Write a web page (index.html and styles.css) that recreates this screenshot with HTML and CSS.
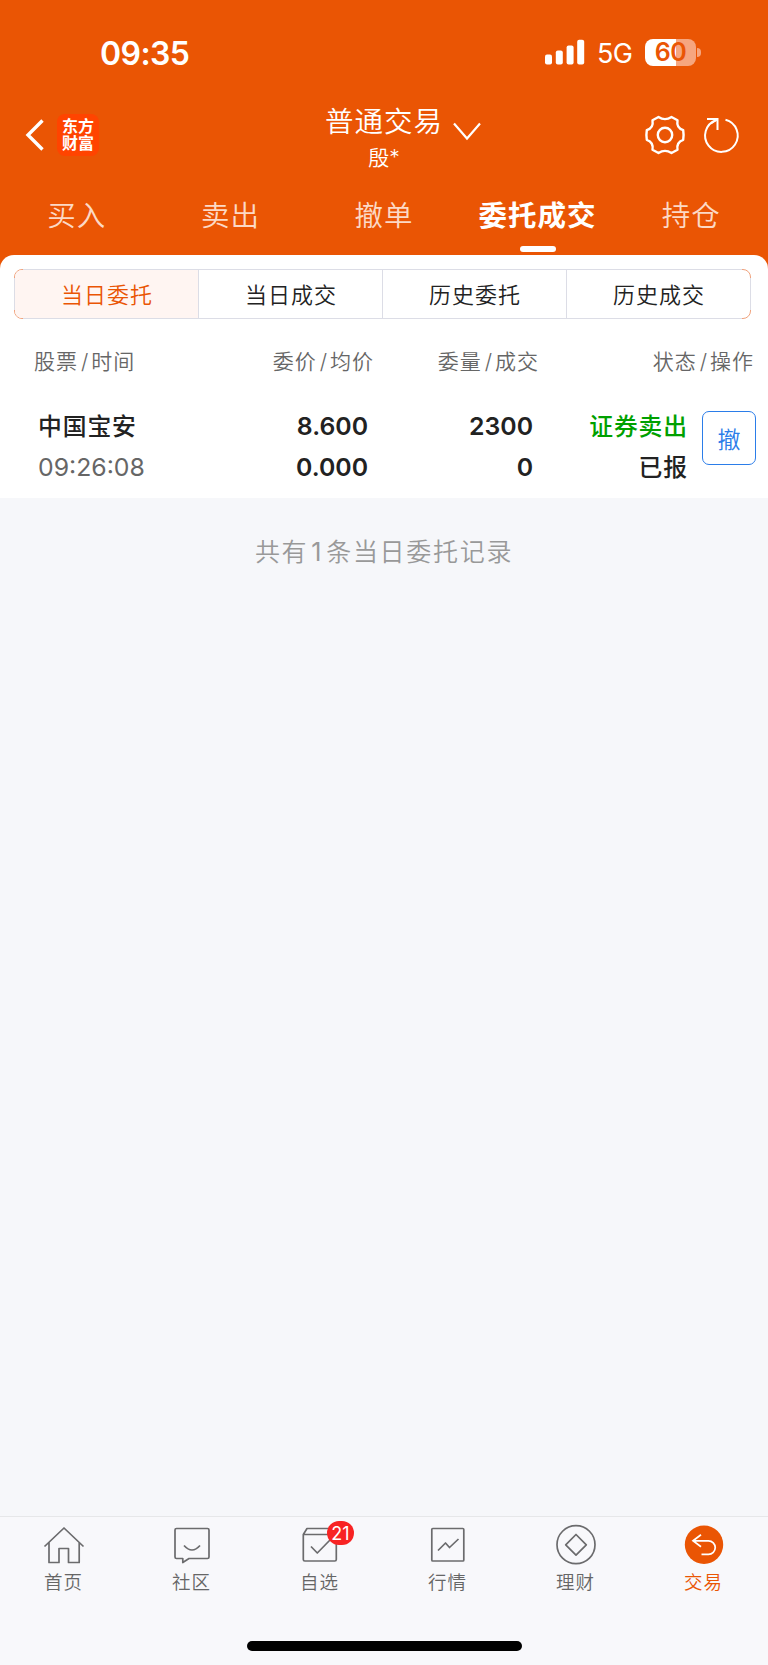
FILE: index.html
```
<!DOCTYPE html>
<html lang="zh-CN">
  <head>
    <meta charset="utf-8" />
    <meta name="viewport" content="width=device-width, initial-scale=1" />
    <title>委托成交</title>
    <link rel="stylesheet" href="styles.css">
  </head>

  <body>
    <header>
      <div class="status">
        <span class="clock">09:35</span>
        <svg class="signal" width="40" height="26" viewBox="0 0 40 26" fill="#fff">
          <rect x="0" y="15.5" width="7" height="10" rx="2" />
          <rect x="10.8" y="11.5" width="7" height="14" rx="2" />
          <rect x="21.6" y="6.5" width="7" height="19" rx="2" />
          <rect x="32.2" y="0.7" width="7" height="24.8" rx="2" />
        </svg>
        <span class="network">5G</span>
        <div class="battery">60</div>
        <i class="nub"></i>
      </div>

      <div class="titlebar">
        <svg class="back" width="20" height="32" viewBox="0 0 20 32" fill="none" stroke="#fff" stroke-width="3.4">
          <path d="M17.5 1.5L3 16l14.5 14.5" />
        </svg>
        <div class="logo">东方<br>财富</div>
        <div class="account">
          <div class="account-type">普通交易</div>
          <div class="account-name">殷*</div>
        </div>
        <svg class="down" width="28" height="20" viewBox="0 0 28 20" fill="none" stroke="#fff" stroke-width="2.2">
          <path d="M1 1.5L14 16.5 27 1.5" />
        </svg>
        <svg class="gear" width="42" height="42" viewBox="-21 -21 42 42" fill="none" stroke="#fff" stroke-width="2.4" stroke-linejoin="round">
          <path d="M-6.5 -18Q0 -13.8 6.5 -18L12.5 -14.8Q11.2 -7.2 18.2 -4.8Q19 0 18.2 4.8Q11.2 7.2 12.5 14.8L6.5 18Q0 13.8 -6.5 18L-12.5 14.8Q-11.2 7.2 -18.2 4.8Q-19 0 -18.2 -4.8Q-11.2 -7.2 -12.5 -14.8Z" />
          <circle r="7.2" />
        </svg>
        <svg class="refresh" width="38" height="38" viewBox="0 0 38 38" fill="none" stroke="#fff" stroke-width="2">
          <path d="M22.5 3.8A16.3 16.3 0 1 1 13 4.2" />
          <path d="M4 3h10.5v11M14.5 3L8 7.5" />
        </svg>
      </div>

      <nav class="tabs">
        <a>买入</a>
        <a>卖出</a>
        <a>撤单</a>
        <a class="active">委托成交</a>
        <a>持仓</a>
      </nav>
    </header>

    <main>
      <section class="sheet">
        <div class="segments">
          <a class="active">当日委托</a>
          <a>当日成交</a>
          <a>历史委托</a>
          <a>历史成交</a>
        </div>

        <div class="row head">
          <span>股票<b>/</b>时间</span>
          <span>委价<b>/</b>均价</span>
          <span>委量<b>/</b>成交</span>
          <span>状态<b>/</b>操作</span>
        </div>

        <div class="row order">
          <div>
            <p class="cn">中国宝安</p>
            <p class="time">09:26:08</p>
          </div>
          <div>
            <p>8.600</p>
            <p>0.000</p>
          </div>
          <div>
            <p>2300</p>
            <p>0</p>
          </div>
          <div>
            <p class="cn sell">证券卖出</p>
            <p class="cn">已报</p>
          </div>
          <button type="button">撤</button>
        </div>
      </section>

      <p class="summary">共有<b>1</b>条当日委托记录</p>
    </main>

    <footer>
      <nav class="dock">
        <a>
          <svg width="42" height="40" viewBox="0 0 42 40" fill="none" stroke="#6b6b6d" stroke-width="1.7" stroke-linejoin="round">
            <path d="M1.5 20.5L21 2l19.5 18.5M6 16.5V36.5H16V22.5H25.5V36.5H36.2V16.5" />
          </svg>
          <span>首页</span>
        </a>
        <a>
          <svg width="42" height="40" viewBox="0 0 42 40" fill="none" stroke="#6b6b6d" stroke-width="1.7" stroke-linejoin="round">
            <path d="M5.5 2.5H36.5Q38 2.5 38 4V31Q38 32.5 36.5 32.5H18L11.800 36.5V32.500H5.500Q4 32.500 4 31V4Q4 2.500 5.500 2.500Z" />
            <path d="M13 19.5Q21 28.5 29 19.5" />
          </svg>
          <span>社区</span>
        </a>
        <a>
          <svg width="42" height="40" viewBox="0 0 42 40" fill="none" stroke="#6b6b6d" stroke-width="1.7" stroke-linejoin="round">
            <path d="M4.3 8.5L8 2.500H33.500L37.300 8.500V33.500Q37.300 35 35.800 35H5.800Q4.300 35 4.300 33.500ZM4.300 8.500H37.300" />
            <path d="M12 20.5L18.3 27 31 14" />
          </svg>
          <i class="badge">21</i>
          <span>自选</span>
        </a>
        <a>
          <svg width="42" height="40" viewBox="0 0 42 40" fill="none" stroke="#6b6b6d" stroke-width="1.7" stroke-linejoin="round">
            <rect x="4.8" y="2.5" width="32" height="32.5" rx="1" />
            <path d="M11 24.5L18.5 17 22.5 21.5 31.5 13" />
          </svg>
          <span>行情</span>
        </a>
        <a>
          <svg width="42" height="40" viewBox="0 0 42 40" fill="none" stroke="#6b6b6d" stroke-width="1.7" stroke-linejoin="round">
            <circle cx="21" cy="18.7" r="19" />
            <path d="M21 8.5L31.3 18.8 21 29.1 10.7 18.8Z" />
          </svg>
          <span>理财</span>
        </a>
        <a class="active">
          <svg width="42" height="40" viewBox="0 0 42 40" fill="none" stroke="#fff" stroke-width="1.7">
            <circle cx="21" cy="18.7" r="19.2" fill="#ea5504" stroke="none" />
            <path d="M18 8.8L10 14.8 18 20.8M10 14.8H25.500A6.700 6.700 0 0 1 25.500 28.300H18.500" />
          </svg>
          <span>交易</span>
        </a>
      </nav>
      <div class="home-indicator"></div>
    </footer>
  </body>
</html>
```

FILE: styles.css
```
/* ------------------------------ reset ------------------------------ */
* {
  margin: 0;
  padding: 0;
  box-sizing: border-box;
}

body {
  width: 768px;
  height: 1665px;
  display: flex;
  flex-direction: column;
  overflow: hidden;
  font-family: Inter, "Noto Sans CJK SC", sans-serif;
  color: #222;
  background: #f6f7fa;
}

svg {
  display: block;
  flex: none;
  overflow: visible;
}

i {
  font-style: normal;
}

/* ------------------------------ header ------------------------------ */
header {
  height: 255px;
  color: #fff;
  background: #ea5504;
}

.status {
  height: 104px;
  padding-left: 100px;
  display: flex;
  align-items: center;
}
.clock {
  width: 445px;
  padding-top: 2px;
  font-size: 32px;
  font-weight: 600;
  letter-spacing: -0.6px;
}
.network {
  width: 60px;
  padding: 2px 0 0 12px;
  font-size: 27px;
  letter-spacing: -0.7px;
}
.battery {
  width: 51px;
  height: 27px;
  border-radius: 8px;
  background: linear-gradient(to right, #fff 31px, #f6a67f 31px);
  color: #ea5504;
  font-size: 25px;
  font-weight: 600;
  letter-spacing: -0.5px;
  line-height: 27px;
  text-align: center;
}
.nub {
  width: 4px;
  height: 9px;
  margin-left: 1px;
  border-radius: 0 4px 4px 0;
  background: #f6a67f;
}

.titlebar {
  height: 83px;
  padding-left: 25px;
  display: flex;
}
.back {
  margin-top: 15px;
}
.logo {
  width: 42px;
  height: 42px;
  margin: 10px 0 0 12px;
  padding-top: 4px;
  border-radius: 8px;
  background: #ff4400;
  font-size: 16px;
  font-weight: 700;
  line-height: 17px;
  text-align: center;
}
.account {
  width: 120px;
  margin-left: 225px;
  text-align: center;
  white-space: nowrap;
}
.account-type {
  height: 36px;
  font-size: 28.5px;
  font-weight: 350;
  letter-spacing: 1px;
  line-height: 36px;
}
.account-name {
  font-size: 21px;
  font-weight: 350;
  line-height: 36px;
}
.down {
  margin: 18px 0 0 9px;
}
.gear {
  margin: 10px 0 0 163px;
}
.refresh {
  margin: 12px 0 0 17px;
}

.tabs {
  display: flex;
}
.tabs a {
  flex: 1;
  height: 68px;
  display: flex;
  flex-direction: column;
  align-items: center;
  font-size: 28.5px;
  font-weight: 350;
  letter-spacing: 1px;
  line-height: 58px;
  color: #fcd9c6;
}
.tabs .active {
  color: #fff;
  font-weight: 700;
}
.tabs .active::after {
  content: "";
  width: 36px;
  height: 6px;
  margin-top: 1px;
  border-radius: 3px;
  background: #fff;
}

/* ------------------------------ orders ------------------------------ */
main {
  flex: 1;
  background: linear-gradient(#ea5504 20px, #f6f7fa 20px);
}
.sheet {
  height: 243px;
  padding: 14px 17px 0 14px;
  border-radius: 14px 14px 0 0;
  background: #fff;
}

.segments {
  position: relative;
  height: 50px;
  display: flex;
  border: 1px solid #f0a27c;
  border-radius: 8px;
}
/* grey straight edges, the orange only shows on the corners */
.segments::before,
.segments::after {
  content: "";
  position: absolute;
  pointer-events: none;
}
.segments::before {
  inset: -1px 8px;
  border: solid #dcdde6;
  border-width: 1px 0;
}
.segments::after {
  inset: 8px -1px;
  border: solid #dcdde6;
  border-width: 0 1px;
}
.segments a {
  flex: 1;
  padding-left: 1px;
  font-size: 22px;
  font-weight: 350;
  letter-spacing: 1px;
  line-height: 50px;
  text-align: center;
}
.segments a + a {
  border-left: 1px solid #dcdde6;
}
.segments .active {
  border-radius: 7px 0 0 7px;
  color: #ea5504;
  background: #fff5f2;
}

.row {
  display: flex;
}
.head {
  height: 84px;
  padding-left: 20px;
  font-size: 21px;
  font-weight: 350;
  letter-spacing: 1px;
  line-height: 85px;
  color: #666;
  text-align: right;
  white-space: nowrap;
}
.head b {
  padding: 0 2px 0 3px;
  font-weight: 300;
}
.head span {
  flex: none;
}
.head span:nth-child(1) {
  width: 100px;
  text-align: left;
}
.head span:nth-child(2) {
  width: 240px;
}
.head span:nth-child(3) {
  width: 165px;
}
.head span:nth-child(4) {
  width: 215px;
}

.order {
  padding-left: 24px;
  font-size: 24.8px;
  font-weight: 600;
  line-height: 41px;
  text-align: right;
}
.order p {
  height: 41px;
}
.order div {
  flex: none;
  padding-top: 3px;
}
.order div:nth-child(1) {
  width: 120px;
  text-align: left;
}
.order div:nth-child(2) {
  width: 210px;
}
.order div:nth-child(3) {
  width: 165px;
}
.order div:nth-child(4) {
  width: 155px;
}
.order .cn {
  font-size: 23.8px;
  font-weight: 500;
  letter-spacing: 0.9px;
}
.order .time {
  font-weight: 400;
  color: #666;
}
.order .sell {
  color: #00a000;
}
.order button {
  flex: none;
  width: 54px;
  height: 54px;
  margin: 8px 0 0 14px;
  border: 1px solid #2b7de9;
  border-radius: 7px;
  background: #fff;
  color: #2b7de9;
  font: 350 23px/50px "Noto Sans CJK SC", sans-serif;
}

.summary {
  font-size: 25px;
  font-weight: 350;
  letter-spacing: 1.7px;
  line-height: 108px;
  color: #999;
  text-align: center;
}
.summary b {
  padding: 0 3px;
  font-weight: 400;
}

/* ------------------------------ dock ------------------------------ */
footer {
  height: 149px;
  border-top: 1px solid #e6e7e9;
  background: #f8f8fb;
}
.dock {
  height: 124px;
  display: flex;
}
.dock a {
  position: relative;
  flex: 1;
  padding-top: 9px;
  display: flex;
  flex-direction: column;
  align-items: center;
  font-size: 18.5px;
  font-weight: 350;
  letter-spacing: 1px;
  line-height: 33px;
  color: #666;
}
.dock span {
  padding-right: 1px;
}
.dock .active {
  color: #ea5504;
}
.badge {
  position: absolute;
  top: 4px;
  left: 71px;
  width: 27px;
  height: 24px;
  border-radius: 12px;
  background: #f82323;
  color: #fff;
  font-size: 18px;
  font-weight: 400;
  letter-spacing: 0;
  line-height: 25px;
  text-align: center;
}
.home-indicator {
  width: 275px;
  height: 10px;
  margin: 0 auto;
  border-radius: 5px;
  background: #000;
}
```
